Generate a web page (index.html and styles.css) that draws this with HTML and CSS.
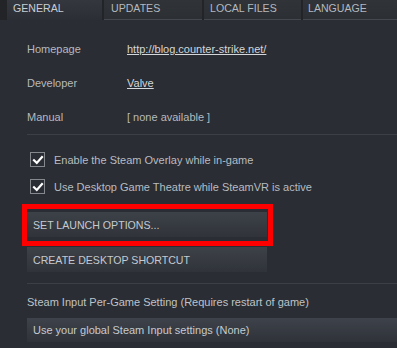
FILE: index.html
```html
<!DOCTYPE html>
<html>
<head>
<meta charset="utf-8">
<link rel="stylesheet" href="styles.css">
</head>
<body>
<div class="tabs">
  <div class="tab active">GENERAL</div>
  <div class="tab t2">UPDATES</div>
  <div class="tab t3">LOCAL FILES</div>
  <div class="tab t4">LANGUAGE</div>
</div>
<div class="content">
  <div class="info">
    <div class="row"><span class="label">Homepage</span><a class="link">http://blog.counter-strike.net/</a></div>
    <div class="row"><span class="label">Developer</span><a class="link">Valve</a></div>
    <div class="row"><span class="label">Manual</span><span class="value">[ none available ]</span></div>
  </div>
  <div class="sep"></div>
  <div class="checks">
    <div class="check-row">
      <span class="box"><svg width="12" height="12" viewBox="0 0 12 12"><path d="M2 6.2 L4.8 9 L10 3" fill="none" stroke="#ffffff" stroke-width="2.2" stroke-linecap="square"/></svg></span>
      <span class="ctext">Enable the Steam Overlay while in-game</span>
    </div>
    <div class="check-row">
      <span class="box"><svg width="12" height="12" viewBox="0 0 12 12"><path d="M2 6.2 L4.8 9 L10 3" fill="none" stroke="#ffffff" stroke-width="2.2" stroke-linecap="square"/></svg></span>
      <span class="ctext">Use Desktop Game Theatre while SteamVR is active</span>
    </div>
  </div>
  <div class="highlight">
    <div class="btn">SET LAUNCH OPTIONS...</div>
  </div>
  <div class="btn second">CREATE DESKTOP SHORTCUT</div>
  <div class="sep wide"></div>
  <div class="input-label">Steam Input Per-Game Setting (Requires restart of game)</div>
  <div class="dropdown">Use your global Steam Input settings (None)</div>
</div>
</body>
</html>
```

FILE: styles.css
```css
html, body {
  margin: 0;
  padding: 0;
}
body {
  width: 397px;
  height: 348px;
  overflow: hidden;
  background: #2a2d33;
  font-family: "Liberation Sans", Arial, sans-serif;
  font-size: 11px;
  color: #b6babf;
}
.tabs {
  display: flex;
  gap: 2px;
  height: 20px;
  padding-left: 7px;
  background: #222428;
}
.tab {
  box-sizing: border-box;
  height: 20px;
  padding-left: 6px;
  line-height: 17px;
  background: linear-gradient(#303338, #2c2f34);
  border-bottom: 1px solid #45484e;
  color: #b4b9bf;
  font-size: 10.6px;
}
.tab.active {
  width: 95px;
  border-bottom: none;
  background: linear-gradient(#34373d, #2b2e34);
  color: #c9ced4;
}
.t2 { width: 98px; padding-left: 7px; }
.t3 { width: 97px; }
.t4 { flex: 1; padding-left: 5px; }
.content {
  padding: 12px 0 0 27px;
}
.row {
  display: flex;
  height: 34px;
  align-items: center;
}
.label {
  width: 100px;
}
.link {
  color: #d4d7da;
  text-decoration: underline;
}
.value {
  color: #b6babf;
}
.sep {
  height: 1px;
  background: #3c3f45;
}
.checks {
  margin-top: 11px;
}
.check-row {
  display: flex;
  align-items: center;
  height: 27px;
  padding-left: 3px;
}
.box {
  box-sizing: border-box;
  width: 15px;
  height: 15px;
  border: 1px solid #85888c;
  background: #2a2d33;
  display: flex;
  align-items: center;
  justify-content: center;
  margin-right: 9px;
}
.ctext {
  color: #b8bcc1;
}
.highlight {
  margin-top: 4px;
  margin-left: -5px;
  width: 241px;
  border: 5px solid #ff0000;
  padding: 3px 0 4px 0;
}
.btn {
  box-sizing: border-box;
  width: 240px;
  height: 25px;
  padding-left: 6px;
  padding-top: 1px;
  line-height: 24px;
  background: linear-gradient(#3d4148, #30333a);
  color: #c5cad0;
  font-size: 10.6px;
}
.second {
  margin-top: 1px;
}
.sep.wide {
  margin-top: 11px;
}
.input-label {
  margin-top: 12px;
  line-height: 13px;
  color: #bfc3c8;
}
.dropdown {
  margin-top: 9px;
  height: 24px;
  line-height: 25px;
  padding-left: 6px;
  background: linear-gradient(#3e424a, #2f3239);
  color: #c5cad0;
}
```
